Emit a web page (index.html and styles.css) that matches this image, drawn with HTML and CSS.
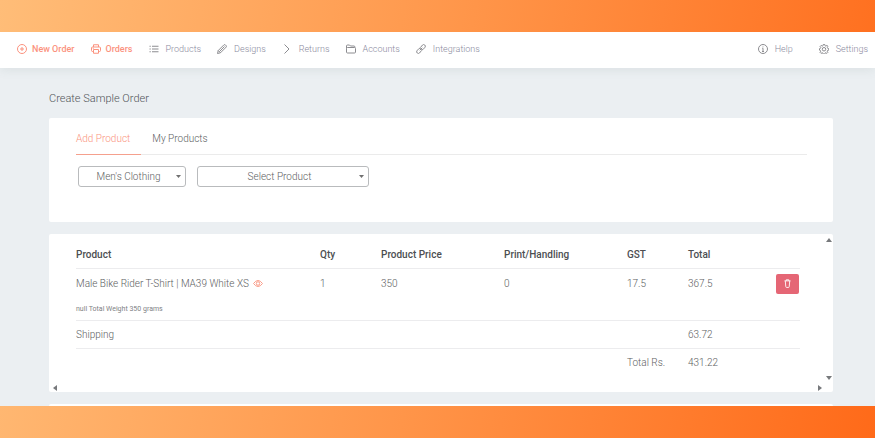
FILE: index.html
```html
<!DOCTYPE html>
<html lang="en">
<head>
	<meta charset="UTF-8">
	<meta name="viewport" content="width=device-width, initial-scale=1.0">
	<title>Create Sample Order</title>
	<link rel="stylesheet" href="styles.css">
</head>
<body>
	<div class="frame">
		<div class="app">
			<nav class="navbar">
				<a class="nav-link active" href="#">
					<svg class="icon" viewBox="0 0 20 20"><circle cx="10" cy="10" r="9"/><path d="M10 6v8M6 10h8"/></svg>
					New Order
				</a>
				<a class="nav-link active" href="#">
					<svg class="icon" viewBox="0 0 20 20"><path d="M5 6V1.500h10V6M5 15H3a2 2 0 0 1-2-2V8a2 2 0 0 1 2-2h14a2 2 0 0 1 2 2v5a2 2 0 0 1-2 2h-2M5 11h10v7.500H5zM3.500 8.500h2"/></svg>
					Orders
				</a>
				<a class="nav-link" href="#">
					<svg class="icon" viewBox="0 0 20 20"><path d="M6 4.500h13M6 10h13M6 15.500h13M1 4.500h2.500M1 10h2.500M1 15.500h2.500"/></svg>
					Products
				</a>
				<a class="nav-link" href="#">
					<svg class="icon" viewBox="0 0 20 20"><path d="M1 19l1.500-6L14 1.500q1.500-1 3 .5l1 1q1.500 1.500.5 3L7 17.500zM2.500 13L7 17.500M5 15L15 5"/></svg>
					Designs
				</a>
				<a class="nav-link" href="#">
					<svg class="icon" viewBox="0 0 20 20"><path d="M5 1l9 9-9 9"/></svg>
					Returns
				</a>
				<a class="nav-link" href="#">
					<svg class="icon" viewBox="0 0 20 20"><path d="M1 9V4q0-2 2-2h4l2 2h7q2 0 2 3M3 7h14q2 0 2 2v7q0 2-2 2H3q-2 0-2-2V9q0-2 2-2z"/></svg>
					Accounts
				</a>
				<a class="nav-link" href="#">
					<svg class="icon" viewBox="0 0 20 20"><path d="M9 7l4-5q2-2 4.500 0T18 6.500l-4 4.500q-2.500 2-5-.5M11 13l-4 5q-2 2-4.500 0T2 13.500L6 9q2.500-2 5 .5M7.500 12.500l5-5"/></svg>
					Integrations
				</a>
				<a class="nav-link help" href="#">
					<svg class="icon" viewBox="0 0 20 20"><circle cx="10" cy="10" r="9"/><path d="M8.500 8.500H10V15M8 15h4M10 5v1.500"/></svg>
					Help
				</a>
				<a class="nav-link settings" href="#">
					<svg class="icon" viewBox="0 0 20 20"><path d="M8.500 1h3l.6 2.500 1.600.7 2.200-1.400 2.100 2.100-1.400 2.200.7 1.600 2.200.6v3l-2.400.6-.7 1.600 1.400 2.200-2.100 2.100-2.200-1.400-1.500.7-.5 2.400h-3l-.6-2.400-1.600-.7-2.200 1.400L2 16.700l1.400-2.200-.7-1.600L1 12.300v-3l1.900-.6.7-1.600L2.200 4.900l2.100-2.100 2.200 1.400 1.500-.7z"/><circle cx="10" cy="10.500" r="3.500"/></svg>
					Settings
				</a>
			</nav>

			<main class="content">
				<h1 class="title">Create Sample Order</h1>

				<section class="card picker">
					<div class="tabs">
						<button class="tab selected" type="button">Add Product</button>
						<button class="tab" type="button">My Products</button>
					</div>
					<div class="selects">
						<select class="select category" aria-label="Category">
							<option>Men's Clothing</option>
						</select>
						<select class="select product" aria-label="Product">
							<option>Select Product</option>
						</select>
					</div>
				</section>

				<section class="card order">
					<table class="items">
						<thead>
							<tr>
								<th>Product</th>
								<th class="col-small">Qty</th>
								<th class="col-wide">Product Price</th>
								<th class="col-wide">Print/Handling</th>
								<th class="col-small">GST</th>
								<th class="col-small">Total</th>
								<th class="col-action"></th>
							</tr>
						</thead>
						<tbody>
							<tr class="item">
								<td>
									Male Bike Rider T-Shirt | MA39 White XS
									<svg class="eye" viewBox="0 0 20 14"><path d="M1 7q9-12 18 0-9 12-18 0z"/><circle cx="10" cy="7" r="3.500"/></svg>
									<div class="weight">null Total Weight 350 grams</div>
								</td>
								<td>1</td>
								<td>350</td>
								<td>0</td>
								<td>17.5</td>
								<td>367.5</td>
								<td class="action">
									<button class="delete" type="button" aria-label="Delete">
										<svg class="trash" viewBox="0 0 16 20"><path d="M1 4h14M5 4V1.500h6V4M3 4l1 13q0 2 2 2h4q2 0 2-2l1-13"/></svg>
									</button>
								</td>
							</tr>
							<tr>
								<td colspan="5">Shipping</td>
								<td colspan="2">63.72</td>
							</tr>
							<tr>
								<td colspan="4"></td>
								<td>Total Rs.</td>
								<td colspan="2">431.22</td>
							</tr>
						</tbody>
					</table>
					<span class="arrow up"></span>
					<span class="arrow down"></span>
					<span class="arrow left"></span>
					<span class="arrow right"></span>
				</section>

				<section class="card next"></section>
			</main>
		</div>
	</div>
</body>
</html>
```
FILE: styles.css
```css
* {
	box-sizing: border-box;
}

body {
	margin: 0;
	font-family: Roboto, "Liberation Sans", sans-serif;
	font-size: 10px;
	font-weight: 300;
	line-height: 12px;
	color: #5c5e61;
}

.frame {
	height: 100vh;
	padding: 32px 0;
	background: linear-gradient(100deg, #ffbd78, #ff9549 50%, #ff6a19);
}

.app {
	height: 100%;
	overflow: hidden;
	background: #ebeff2;
}

.navbar {
	display: flex;
	align-items: center;
	gap: 16px;
	height: 36px;
	padding: 0 7px 2px 17px;
	background: #fff;
	box-shadow: 0 2px 10px rgba(80, 110, 100, 0.1);
}

.nav-link {
	display: flex;
	align-items: center;
	gap: 7px;
	font-size: 9px;
	color: #8b8b9e;
	text-decoration: none;
	white-space: nowrap;
}

.nav-link.active {
	gap: 5px;
	font-weight: 500;
	color: #fb927e;
}

.icon {
	width: 10px;
	height: 10px;
	fill: none;
	stroke: #8c8c90;
	stroke-width: 2;
}

.active .icon {
	stroke: #fb927e;
}

.help {
	margin-left: auto;
}

.settings {
	margin-left: 10px;
}

.content {
	padding: 24px 42px 0 49px;
}

.title {
	margin: 0 0 12px;
	font-size: 11px;
	font-weight: 300;
	line-height: 14px;
	color: #505458;
}

.card {
	position: relative;
	margin-bottom: 12px;
	border-radius: 2px;
	background: #fff;
}

.picker {
	height: 104px;
	padding: 6px 26px 0 27px;
}

.tabs {
	display: flex;
	gap: 11px;
	border-bottom: 1px solid #ebebeb;
}

.tab {
	height: 31px;
	margin-bottom: -1px;
	padding: 0 11px 0 0;
	border: 0;
	border-bottom: 1px solid transparent;
	background: none;
	font: inherit;
	color: inherit;
}

.tab.selected {
	border-color: #f5a08d;
	color: #fa947e;
}

.selects {
	display: flex;
	gap: 11px;
	padding: 11px 2px;
}

/* small caret at the right edge */
.select {
	height: 21px;
	padding: 0 7px 0 0;
	border: 1px solid #b9bbbd;
	border-radius: 3px;
	appearance: none;
	background: #fff url("data:image/svg+xml,%3Csvg xmlns='http://www.w3.org/2000/svg' viewBox='0 0 5 3'%3E%3Cpath d='M0 0h5L2.5 3z' fill='%23707070'/%3E%3C/svg%3E") no-repeat right 4px center / 5px 3px;
	font: inherit;
	color: inherit;
	text-align: center;
	text-align-last: center;
}

.category {
	width: 108px;
}

.product {
	width: 172px;
}

.order {
	padding: 6px 33px 16px 27px;
}

.items {
	width: 100%;
	table-layout: fixed;
	border-collapse: collapse;
}

.items th,
.items td {
	height: 28px;
	padding: 2px 0 0;
	border-bottom: 1px solid #ececee;
	text-align: left;
}

.items th {
	font-weight: 500;
	color: #4c4e51;
}

.items tr:last-child td {
	border-bottom: 0;
}

.items thead th {
	border-bottom: 1px solid #ececee;
}

.items .item td {
	height: 52px;
	padding-top: 9px;
	vertical-align: top;
}

.items .item .action {
	padding: 5px 1px 0 0;
	text-align: right;
}

.col-small {
	width: 61px;
}

.col-wide {
	width: 123px;
}

.col-action {
	width: 51px;
}

.eye {
	width: 10px;
	height: 7px;
	margin-left: 2px;
	fill: none;
	stroke: #fa9c88;
	stroke-width: 2;
}

.weight {
	margin-top: 13px;
	font-size: 7px;
	font-weight: 400;
	color: #808285;
}

.delete {
	width: 23px;
	height: 20px;
	padding: 0;
	border: 0;
	border-radius: 2px;
	background: #e56675;
	line-height: 0;
}

.trash {
	width: 7px;
	height: 9px;
	fill: none;
	stroke: #fff;
	stroke-width: 2;
}

/* scrollbar arrows */
.arrow {
	position: absolute;
	border: 3px solid transparent;
}

.up {
	top: 1px;
	right: 1px;
	border-bottom: 4px solid #77797c;
}

.down {
	right: 1px;
	bottom: 9px;
	border-top: 4px solid #77797c;
}

.left {
	bottom: 1px;
	left: 1px;
	border-right: 4px solid #77797c;
}

.right {
	right: 8px;
	bottom: 1px;
	border-left: 4px solid #77797c;
}

.next {
	height: 60px;
}
```
